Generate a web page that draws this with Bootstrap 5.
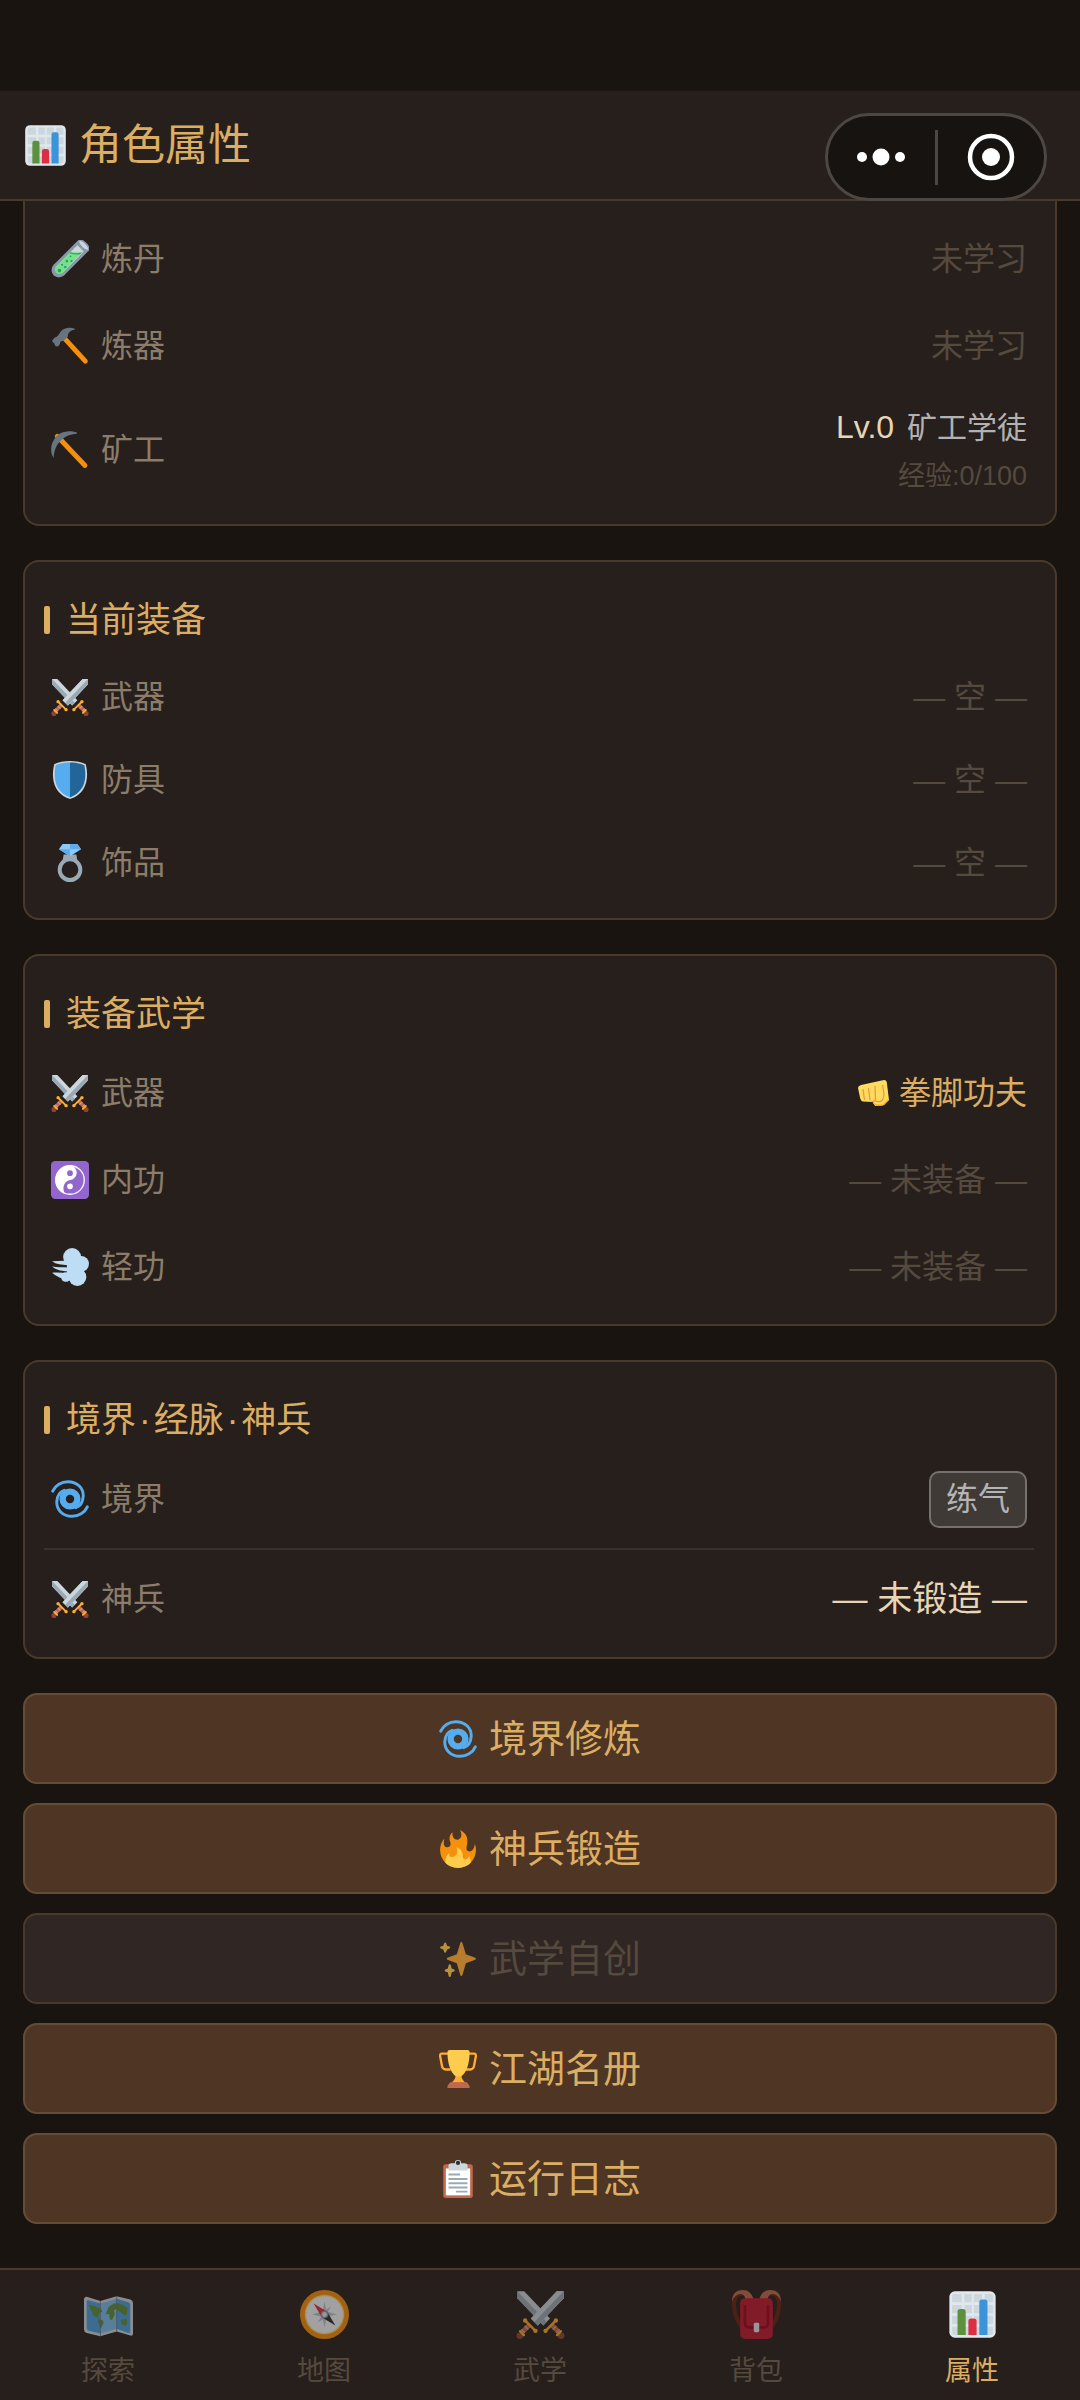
<!DOCTYPE html>
<html lang="zh-CN">
<head>
<meta charset="utf-8">
<meta name="viewport" content="width=device-width, initial-scale=1">
<title>角色属性</title>
<link href="https://cdn.jsdelivr.net/npm/bootstrap@5.3.0/dist/css/bootstrap.min.css" rel="stylesheet">
<style>
:root{--ink:#1a1410;--panel:#271f1c;--line:#4a3a2c;--gold:#dbae63;--label:#8b7d69;--dim:#554a3e;--cream:#e8d5b5}
body{background:var(--ink);color:var(--cream);font-family:"Liberation Sans","Noto Sans CJK SC",sans-serif;font-size:32px;line-height:48px}
.status-space{height:91px}
.app-head{height:110px;background:var(--panel);border-bottom:2px solid var(--line);padding:0 24px}
.app-title{font-size:43px;line-height:56px;font-weight:400;color:var(--gold);gap:12px}
.ico{width:38px;height:38px;flex:none}
.ico-title{width:43px;height:43px}
.ico-nav{width:49px;height:49px}
.ico-fist{width:31px;height:26px}
.capsule{top:22px;right:33px;width:222px;height:88px;border:3px solid #4d4744;border-radius:44px;background:#171310}
.capsule button{background:none;border:0;padding:0;line-height:0}
.capsule .split{width:3px;height:55px;background:#4d4744}
.stack{padding:0 23px;gap:34px}
.panel{background:var(--panel);border:2px solid var(--line);border-radius:16px;padding:34px 21px 14px 19px}
.panel-cut{border-top:0;border-radius:0 0 16px 16px;padding-top:14px}
.panel-title{font-size:35px;line-height:48px;font-weight:400;color:var(--gold);margin:0 0 11px;gap:16px}
.panel-title::before{content:"";width:6px;height:28px;border-radius:2px;background:var(--gold)}
.dot{margin:0 3px}
.line-item{height:87px;padding:0 7px}
.line-tight .line-item{height:83px}
.line-item.line-tall{height:121px}
.line-roomy{padding-bottom:9px}
.line-roomy .panel-title{margin-bottom:6px}
.line-roomy .line-item{height:98px}
.split-line{height:2px;margin:0;border:0;background:#3b312b;opacity:1}
.tag-name{color:var(--label);gap:12px}
.dim{color:var(--dim)}
.gold{color:var(--gold);gap:10px}
.rank{font-size:30px;color:#b2b2b2}
.exp{font-size:27px}
.big{font-size:35px}
.realm{border:2px solid #76716e;border-radius:10px;background:#403a36;color:#b4b4b4;line-height:53px;padding:0 15px}
.acts{gap:19px}
.act{height:91px;border:2px solid #634d36;border-radius:14px;background:#4e3524;color:var(--gold);font-size:38px;gap:12px}
.act:disabled{background:#302623;border-color:var(--line);color:var(--dim)}
.act:disabled .ico{opacity:.65}
.tabs{background:var(--panel);border-top:2px solid var(--line);padding:20px 0 13px}
.tab-link{flex:1 1 0;gap:16px;font-size:27px;line-height:32px;color:var(--dim);text-decoration:none}
.tab-link .ico{opacity:.6}
.tab-link.on{color:var(--gold)}
.tab-link.on .ico{opacity:1}
</style>
</head>
<body class="d-flex flex-column min-vh-100">
<svg width="0" height="0" class="position-absolute" aria-hidden="true">
<symbol id="i-chart" viewBox="0 0 36 36"><rect x="1" y="1" width="34" height="34" rx="4" fill="#e1e8ed"/><path fill="#ccd6dd" d="M3 5q0-2 2-2h5v6H3zM12 3h5.500v6H12zM19 3h6v6h-6zM27 3h4q2 0 2 2v4h-6zM3 11h7v6H3zM12 11h5.500v6H12zM19 11h6v6h-6zM27 11h6v6h-6zM3 19h7v6H3zM12 19h5.500v6H12zM19 19h6v6h-6zM27 19h6v6h-6zM3 27h7v6H5q-2 0-2-2zM12 27h5.500v6H12zM19 27h6v6h-6zM27 27h6v4q0 2-2 2h-4z"/><path fill="#5c913b" d="M7 33V16q0-2 2-2h2q2 0 2 2v17z"/><path fill="#dd2e44" d="M15 33V23q0-2 2-2h2q2 0 2 2v10z"/><path fill="#3b94d9" d="M23 33V9q0-2 2-2h2q2 0 2 2v24z"/></symbol>
<symbol id="i-tube" viewBox="0 0 36 36"><path d="M7.500 28.500 30 6" stroke="#8899a6" stroke-width="14" fill="none"/><circle cx="7.500" cy="28.500" r="7" fill="#8899a6"/><path d="M8 28 28 8" stroke="#ccd6dd" stroke-width="8.500"/><path d="M5 25 18.500 11.500h11L11 31z" fill="#77e08f"/><circle cx="8" cy="28" r="4.300" fill="#77e08f"/><path d="M18.500 11.500q5 2 11 0l-2 2q-4 1-10-1z" fill="#3e9f5b"/><ellipse cx="31" cy="5" rx="2.600" ry="6.500" transform="rotate(-45 31 5)" fill="#ccd6dd" stroke="#8899a6" stroke-width="1.500"/><g fill="#22a35b"><circle cx="8" cy="29" r="1.700"/><circle cx="13.500" cy="25.500" r="1.200"/><circle cx="10.500" cy="23.500" r="1"/><circle cx="15" cy="20" r="1.200"/><circle cx="19.500" cy="20" r="1"/><circle cx="18.500" cy="15.500" r=".8"/></g></symbol>
<symbol id="i-hammer" viewBox="0 0 36 36"><path d="m13 11 19.500 21.300" stroke="#f4900c" stroke-width="4.600" stroke-linecap="round"/><path fill="#66757f" d="M22.500 1.600C17-.2 12 1.200 9.500 4 7.500 6.500 6.500 9.500 3.500 10L1 13l1 2 1 .2 1 2.800 2.500.5 2-2.500c0-2 1-3 3-2.500l4.500-4.500C15.500 6 18.500 2.800 22.500 2.600z"/></symbol>
<symbol id="i-pick" viewBox="0 0 36 36"><path d="m6 5 26.200 27.700" stroke="#f4900c" stroke-width="4.600" stroke-linecap="round"/><path fill="#66757f" d="M24.500 1.500C15-2 6 2 3 8-.5 13-1 21 2.500 25.500 3 18 5 13.500 9 9.500 13 5 18 3 24.500 2.500z"/></symbol>
<symbol id="i-swords" viewBox="0 0 36 36"><g><path fill="#ccd6dd" d="M1 1h5l19 20-5 5L1 6z"/><path fill="#99aab5" d="M1 1v5l19 20 2.500-2.500z"/><path d="m26 25.500 6 6" stroke="#bf6952" stroke-width="3.600"/><path d="m27 29 2.600-2.600M29.500 31.500l2.500-2.600" stroke="#da9f83" stroke-width="1"/><circle cx="33.200" cy="33.600" r="2.400" fill="#8a4633"/><path d="m29.200 22.500-7.500 7.500M33 30.300l-2.800 2.800" stroke="#ffac33" stroke-width="1.800" stroke-linecap="round"/><circle cx="29.300" cy="22.400" r="1.600" fill="#ffac33"/><circle cx="21.700" cy="30" r="1.600" fill="#ffac33"/></g><g transform="matrix(-1 0 0 1 36 0)"><path fill="#ccd6dd" d="M1 1h5l19 20-5 5L1 6z"/><path fill="#99aab5" d="M6 1H3.500l19 22.500L25 21z"/><path d="m26 25.500 6 6" stroke="#bf6952" stroke-width="3.600"/><path d="m27 29 2.600-2.600M29.500 31.500l2.500-2.600" stroke="#da9f83" stroke-width="1"/><path fill="#ccd6dd" d="M1 1h5l19 20-5 5L1 6z"/><path fill="#99aab5" d="M1 1v5l19 20 2.500-2.500z"/><circle cx="33.200" cy="33.600" r="2.400" fill="#8a4633"/><path d="m29.200 22.500-7.500 7.500M33 30.300l-2.800 2.800" stroke="#ffac33" stroke-width="1.800" stroke-linecap="round"/><circle cx="29.300" cy="22.400" r="1.600" fill="#ffac33"/><circle cx="21.700" cy="30" r="1.600" fill="#ffac33"/></g></symbol>
<symbol id="i-shield" viewBox="0 0 36 36"><path fill="#ccd6dd" d="M18 0C12 0 7 1 3 3 1 12 1.500 20 5 26c3 5 8 8.500 13 10 5-1.500 10-5 13-10 3.500-6 4-14 2-23-4-2-9-3-15-3z"/><path fill="#55acee" d="M18 1.500c-5.500 0-10 .9-13.600 2.600C2.800 12 3.200 19.500 6.400 25.200 9 29.800 13.500 33 18 34.500z"/><path fill="#269" d="M18 1.500c5.500 0 10 .9 13.600 2.600 1.600 7.900 1.200 15.400-2 21.100C27 29.800 22.500 33 18 34.500z"/></symbol>
<symbol id="i-ring" viewBox="0 0 36 36"><circle cx="18" cy="24.300" r="9.800" fill="none" stroke="#99aab5" stroke-width="3.800"/><path fill="#99aab5" d="m12 10 12 0 1 6H11z"/><path fill="#8ccaf7" d="M11 0h14l3.500 5L18 11.500 7.500 5z"/><path fill="#5dadec" d="M18 0h7l3.500 5H18zM7.500 5H18v6.500z"/></symbol>
<symbol id="i-yin" viewBox="0 0 36 36"><rect width="36" height="36" rx="4" fill="#9266cc"/><circle cx="18" cy="18" r="13.500" fill="none" stroke="#fff" stroke-width="1.200"/><path fill="#fff" d="M18 4a14 14 0 0 0-4 27.400c-4-3.400-2.500-12.400 4-13.400 8-1 9-12 0-14z"/><circle cx="18" cy="11.500" r="2.700" fill="#9266cc"/><circle cx="18" cy="24" r="2.700" fill="#fff"/></symbol>
<symbol id="i-dash" viewBox="0 0 36 36"><g fill="#bdddf4"><circle cx="20" cy="8.500" r="8.500"/><circle cx="28.500" cy="15" r="7.500"/><circle cx="25" cy="27.500" r="8.500"/><circle cx="14" cy="27.500" r="4.500"/><path d="M15 10h16v18H15zM1 12.500l12-.5 3 4C10 16 5 15.500 1 12.500zM1 17.500c5 1 10 .5 15 1V22C11 22 6 21.500 1 17.500zM1 23.500c5-.5 10 0 15 .500v8C10 28 6 28 1 23.500z"/></g></symbol>
<symbol id="i-fist" viewBox="0 0 31 26"><path fill="#ffdc5d" d="M3 5 26 0q3 0 3 4l2 16-5 5-9 1-2-4-10-.500q-2 0-3-4L0 8q0-2 3-3z"/><path d="m5 9 1.500 11M10.500 8l1.500 12.500M17 6l.5 14M17.500 20q-1 2-4 1M24.500 5l1.500 9q-.5 7-4 7.500-3 .5-5-1" fill="none" stroke="#ef9645" stroke-width="1.300"/><path d="M15 22.500q2 3.500 10 2.500l5-5" fill="none" stroke="#ffac33" stroke-width="1.200"/></symbol>
<symbol id="i-cyclone" viewBox="0 0 36 36"><g fill="none" stroke="#55acee"><circle cx="18" cy="18" r="7" stroke-width="6"/><g stroke-width="2.800" stroke-linecap="round"><path d="M1.600 10.600C4 5 10 1.600 16 1.600c9 0 15 6.400 14.500 14-.4 5.400-3 9.400-7 10.600"/><path d="M34.400 25.400c-2.400 5.600-8.400 9-14.400 9-9 0-15-6.400-14.500-14 .4-5.400 3-9.400 7-10.600"/></g></g></symbol>
<symbol id="i-fire" viewBox="0 0 36 36"><path fill="#f4900c" d="M35 19c0-2.062-.367-4.039-1.040-5.868-.46 5.389-3.333 8.157-6.335 6.868-2.812-1.208-.917-5.917-.777-8.164.236-3.809-.012-8.169-6.931-11.794 2.875 5.500.333 8.917-2.333 9.125-2.958.231-5.667-2.542-4.667-7.042-3.238 2.386-3.332 6.402-2.333 9 1.042 2.708-.042 4.958-2.583 5.208-2.840.28-4.418-3.041-2.963-8.333C2.520 10.965 1 14.805 1 19c0 9.389 7.611 17 17 17s17-7.611 17-17z"/><path fill="#ffcc4d" d="M28.394 23.999c.148 3.084-2.561 4.293-4.019 3.709-2.106-.843-1.541-2.291-2.083-5.291s-2.625-5.083-5.708-6c2.250 6.333-1.247 8.667-3.080 9.084-1.872.426-3.753-.001-3.968-4.007C7.352 23.668 6 26.676 6 30c0 .368.023.73.055 1.090C9.125 34.124 13.342 36 18 36s8.875-1.876 11.945-4.910c.032-.36.055-.722.055-1.090 0-2.187-.584-4.236-1.606-6.001z"/></symbol>
<symbol id="i-spark" viewBox="0 0 36 36"><path fill="#ffac33" d="M34.347 16.893l-8.899-3.294-3.323-10.891c-.128-.42-.517-.708-.956-.708-.439 0-.828.288-.956.708l-3.322 10.891-8.900 3.294c-.393.146-.653.519-.653.938 0 .418.26.793.653.938l8.895 3.293 3.324 11.223c.126.424.516.715.959.715.442 0 .833-.291.959-.716l3.324-11.223 8.896-3.293c.391-.144.652-.518.652-.937 0-.418-.261-.792-.653-.938z"/><path fill="#ffcc4d" d="M14.347 27.894l-2.314-.856-.9-3.300c-.118-.436-.513-.738-.964-.738-.451 0-.846.302-.965.737l-.9 3.300-2.313.856c-.393.146-.653.52-.653.938 0 .418.26.792.653.938l2.301.853.907 3.622c.112.444.511.756.97.756.459 0 .858-.312.97-.757l.907-3.622 2.301-.853c.393-.144.653-.518.653-.936 0-.418-.26-.792-.653-.938zM10.009 6.231l-2.364-.875-.876-2.365c-.145-.393-.519-.653-.938-.653-.418 0-.792.26-.938.653l-.875 2.365-2.365.875c-.393.146-.653.52-.653.938 0 .418.26.792.653.938l2.365.875.875 2.365c.146.393.52.653.938.653.418 0 .792-.26.938-.653l.875-2.365 2.365-.875c.393-.146.653-.52.653-.938 0-.418-.26-.792-.653-.938z"/></symbol>
<symbol id="i-cup" viewBox="0 0 36 36"><path d="M9 3.500H2.500q-1.500 0-1.500 2L3 16q1 2.500 4 2.500h4M27 3.500h6.500q1.500 0 1.500 2L33 16q-1 2.500-4 2.500h-4" fill="none" stroke="#ffac33" stroke-width="2.200"/><path fill="#ffac33" d="M16 22h5c0 4 1 6 4 9H12c3-3 4-5 4-9z"/><path fill="#ffcc4d" d="M8 2q0-2 2-2h17q2 0 2 2c0 11-3 20-8 23h-5C11 22 8 13 8 2z"/><path fill="#c1694f" d="M8 36v-2l2.500-3.500h16L29 34v2z"/></symbol>
<symbol id="i-clip" viewBox="0 0 36 36"><rect x="4" y="4" width="28" height="32" rx="2.500" fill="#c1694f"/><path fill="#fff" d="M6.500 8h23v25.500h-23z"/><path fill="#ccd6dd" d="M9 10V5q0-2 3-2h3q0-3 3-3t3 3h3q3 0 3 2v5z"/><circle cx="18" cy="2.800" r="2" fill="#292f33"/><path d="M9 13.800h11M9 18h18M9 22h18M9 26h18M16 30h11" stroke="#99aab5" stroke-width="1.800"/></symbol>
<symbol id="i-map" viewBox="0 0 36 36"><path fill="#ccd6dd" d="M0 7q0-2 2-2l10 3 12-3.500L34 7q2 .5 2 2.500V32q0 2-2 1.500l-10-3L12 34 2 31.500Q0 31 0 29z"/><path fill="#4a9fe0" d="M2 8.500q0-1.500 1.500-1L12 10v22L3.500 30Q2 29.500 2 28zM24 6.500l8.500 2.500q1.500.5 1.500 2v19.500q0 1.500-1.500 1L24 28.500z"/><path fill="#77bdf0" d="m12 10 12-3.500v22L12 32z"/><path fill="#5c913b" d="m3.500 11 5 1 4 2 1 2-2.500 1-1 3 1 1-4-2zM10 21.500l3.500.5 1 2-2.500 5-1-4zM16 18l2-5.500 4-2.500 2-.5v4l-2 1.500.5 3-2 4-1.500-.5-.5-4zM24 9.500l5 1.500 3 2-.5 5-2 .5-2.500-2-3-2zM27 22l4-1 1 3-1.500 2.500-3-1.500z"/><path d="M12 8v26M24 4.500v26" stroke="#66757f" stroke-width=".6"/></symbol>
<symbol id="i-compass" viewBox="0 0 36 36"><circle cx="18" cy="18" r="18" fill="#f4900c"/><circle cx="18" cy="18" r="14.500" fill="#ffd983"/><circle cx="18" cy="18" r="13.500" fill="#f5f8fa"/><path fill="#b8c5cd" d="m18 8.500 1.200 6 3.800-2.500-2.500 4 6.500 2-6.500 1.500 2.500 4.500-3.800-2.500-1.200 6-1.200-6-3.800 2.500 2.500-4.500L9 18l6.500-2-2.500-4 3.800 2.500z"/><path fill="#dd2e44" d="m10 10 10 6-4 4z"/><path fill="#292f33" d="m26 26-10-6 4-4z"/><circle cx="18" cy="18" r="2.300" fill="#e1e8ed" stroke="#8899a6"/></symbol>
<symbol id="i-pack" viewBox="0 0 36 36"><path d="M11.500 3C4 1 1 5 1.500 12q.5 8 5.500 15M24.500 3C32 1 35 5 34.500 12q-.5 8-5.500 15" fill="none" stroke="#662113" stroke-width="3"/><path fill="#c1694f" d="M0 9q0-9 8-9 6 0 8 7h-6Q9 3 6 3 1.500 3.500 0 9zM36 9q0-9-8-9-6 0-8 7h6q1-4 4-4 4.500.5 6 6z"/><path fill="#be1931" d="M6 10q0-4 4-4h16q4 0 4 4v22q0 4-4 4H10q-4 0-4-4z"/><path d="M9.500 11v13q0 3.500 3.500 3.500h10q3.500 0 3.500-3.500V11" fill="none" stroke="#a0041e" stroke-width="2"/><rect x="16" y="24" width="4" height="7" rx="1" fill="#e1e8ed"/></symbol>
</svg>

<div class="status-space"></div>
<header class="app-head position-relative d-flex align-items-center">
  <h1 class="app-title d-flex align-items-center m-0"><svg class="ico ico-title" aria-hidden="true"><use href="#i-chart"/></svg>角色属性</h1>
  <div class="capsule position-absolute d-flex align-items-center justify-content-between">
    <button type="button" class="flex-fill" aria-label="更多"><svg width="48" height="18" viewBox="0 0 48 18" fill="#fff"><circle cx="5" cy="9" r="5"/><circle cx="24" cy="9" r="8.500"/><circle cx="43" cy="9" r="5"/></svg></button>
    <span class="split"></span>
    <button type="button" class="flex-fill" aria-label="关闭"><svg width="48" height="48" viewBox="0 0 48 48"><circle cx="24" cy="24" r="21" fill="none" stroke="#fff" stroke-width="4.500"/><circle cx="24" cy="24" r="9" fill="#fff"/></svg></button>
  </div>
</header>

<main class="stack d-flex flex-column">
  <section class="panel panel-cut">
    <div class="line-item d-flex align-items-center justify-content-between"><span class="tag-name d-flex align-items-center"><svg class="ico" aria-hidden="true"><use href="#i-tube"/></svg>炼丹</span><span class="dim">未学习</span></div>
    <div class="line-item d-flex align-items-center justify-content-between"><span class="tag-name d-flex align-items-center"><svg class="ico" aria-hidden="true"><use href="#i-hammer"/></svg>炼器</span><span class="dim">未学习</span></div>
    <div class="line-item line-tall d-flex align-items-center justify-content-between"><span class="tag-name d-flex align-items-center"><svg class="ico" aria-hidden="true"><use href="#i-pick"/></svg>矿工</span><div class="text-end pt-1"><div>Lv.0 <span class="rank ms-1">矿工学徒</span></div><div class="exp dim">经验:0/100</div></div></div>
  </section>

  <section class="panel line-tight">
    <h2 class="panel-title d-flex align-items-center">当前装备</h2>
    <div class="line-item d-flex align-items-center justify-content-between"><span class="tag-name d-flex align-items-center"><svg class="ico" aria-hidden="true"><use href="#i-swords"/></svg>武器</span><span class="dim">— 空 —</span></div>
    <div class="line-item d-flex align-items-center justify-content-between"><span class="tag-name d-flex align-items-center"><svg class="ico" aria-hidden="true"><use href="#i-shield"/></svg>防具</span><span class="dim">— 空 —</span></div>
    <div class="line-item d-flex align-items-center justify-content-between"><span class="tag-name d-flex align-items-center"><svg class="ico" aria-hidden="true"><use href="#i-ring"/></svg>饰品</span><span class="dim">— 空 —</span></div>
  </section>

  <section class="panel">
    <h2 class="panel-title d-flex align-items-center">装备武学</h2>
    <div class="line-item d-flex align-items-center justify-content-between"><span class="tag-name d-flex align-items-center"><svg class="ico" aria-hidden="true"><use href="#i-swords"/></svg>武器</span><span class="gold d-flex align-items-center"><svg class="ico-fist" aria-hidden="true"><use href="#i-fist"/></svg>拳脚功夫</span></div>
    <div class="line-item d-flex align-items-center justify-content-between"><span class="tag-name d-flex align-items-center"><svg class="ico" aria-hidden="true"><use href="#i-yin"/></svg>内功</span><span class="dim">— 未装备 —</span></div>
    <div class="line-item d-flex align-items-center justify-content-between"><span class="tag-name d-flex align-items-center"><svg class="ico" aria-hidden="true"><use href="#i-dash"/></svg>轻功</span><span class="dim">— 未装备 —</span></div>
  </section>

  <section class="panel line-roomy">
    <h2 class="panel-title d-flex align-items-center"><span>境界<span class="dot">·</span>经脉<span class="dot">·</span>神兵</span></h2>
    <div class="line-item d-flex align-items-center justify-content-between"><span class="tag-name d-flex align-items-center"><svg class="ico" aria-hidden="true"><use href="#i-cyclone"/></svg>境界</span><span class="realm">练气</span></div>
    <hr class="split-line">
    <div class="line-item d-flex align-items-center justify-content-between"><span class="tag-name d-flex align-items-center"><svg class="ico" aria-hidden="true"><use href="#i-swords"/></svg>神兵</span><span class="big">— 未锻造 —</span></div>
  </section>

  <div class="acts d-flex flex-column">
    <button type="button" class="act d-flex align-items-center justify-content-center"><svg class="ico" aria-hidden="true"><use href="#i-cyclone"/></svg>境界修炼</button>
    <button type="button" class="act d-flex align-items-center justify-content-center"><svg class="ico" aria-hidden="true"><use href="#i-fire"/></svg>神兵锻造</button>
    <button type="button" class="act d-flex align-items-center justify-content-center" disabled><svg class="ico" aria-hidden="true"><use href="#i-spark"/></svg>武学自创</button>
    <button type="button" class="act d-flex align-items-center justify-content-center"><svg class="ico" aria-hidden="true"><use href="#i-cup"/></svg>江湖名册</button>
    <button type="button" class="act d-flex align-items-center justify-content-center"><svg class="ico" aria-hidden="true"><use href="#i-clip"/></svg>运行日志</button>
  </div>
</main>

<nav class="tabs d-flex mt-auto" aria-label="主导航">
  <a href="#" class="tab-link d-flex flex-column align-items-center"><svg class="ico ico-nav" aria-hidden="true"><use href="#i-map"/></svg>探索</a>
  <a href="#" class="tab-link d-flex flex-column align-items-center"><svg class="ico ico-nav" aria-hidden="true"><use href="#i-compass"/></svg>地图</a>
  <a href="#" class="tab-link d-flex flex-column align-items-center"><svg class="ico ico-nav" aria-hidden="true"><use href="#i-swords"/></svg>武学</a>
  <a href="#" class="tab-link d-flex flex-column align-items-center"><svg class="ico ico-nav" aria-hidden="true"><use href="#i-pack"/></svg>背包</a>
  <a href="#" class="tab-link on d-flex flex-column align-items-center" aria-current="page"><svg class="ico ico-nav" aria-hidden="true"><use href="#i-chart"/></svg>属性</a>
</nav>
<script src="https://cdn.jsdelivr.net/npm/bootstrap@5.3.0/dist/js/bootstrap.bundle.min.js"></script>
</body>
</html>
